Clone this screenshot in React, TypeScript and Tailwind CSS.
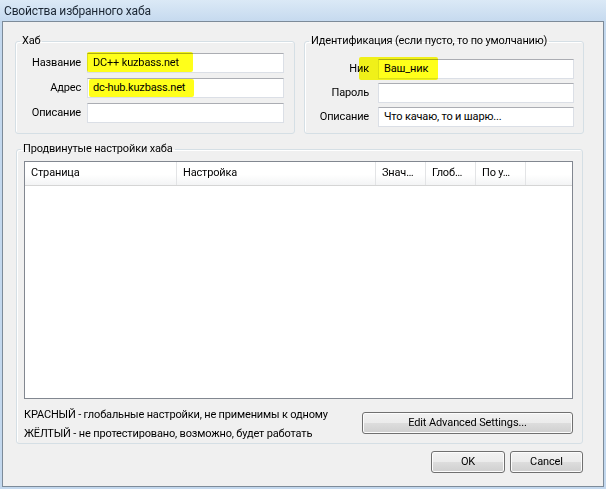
import React from 'react';

const inputCls =
  'relative h-[20px] bg-white border border-[#dbdfe6] border-t-[#abadb3] pl-[5px] flex items-center whitespace-nowrap';
const btnCls =
  'h-[22px] rounded-[3px] border border-[#707070] bg-[linear-gradient(#f2f2f2,#ebebeb_50%,#dddddd_50%,#cfcfcf)] shadow-[inset_0_0_0_1px_#fcfcfc] flex items-center justify-center text-black tracking-[-0.01em]';
const groupCls =
  'border border-[#d5dfe5] rounded-[3px] shadow-[inset_1px_1px_0_#ffffff] m-0 min-w-0';
const legendCls = 'ml-[4px] px-[2px] leading-[16px] h-[16px] whitespace-nowrap';

function Mark({ className }: { className: string }) {
  return <div className={`absolute bg-[#ffff1a] mix-blend-multiply rounded-[2px] ${className}`} />;
}

export default function App() {
  return (
    <div className="w-[606px] h-[489px] flex flex-col bg-[#c3d8ee] text-[11px] tracking-[-0.015em] text-black font-['Roboto',sans-serif]">
      <div className="h-[21px] pl-[4px] flex items-center text-[12px] text-[#1b2633] bg-[linear-gradient(#dbe9f6,#c6daef)]">
        Свойства избранного хаба
      </div>

      <div className="flex-1 mx-[2px] mb-[2px] border border-[#7d8b99] bg-[#f0f0f0] flex flex-col pl-[12px] pr-[19px]">
        {/* top groups */}
        <div className="flex gap-[9px] mt-[11px]">
          <fieldset className={`${groupCls} w-[280px] pt-[4px] pb-[10px] pr-[10px]`}>
            <legend className={legendCls}>Хаб</legend>
            <div className="flex flex-col gap-[5px]">
              <div className="flex items-center">
                <div className="w-[65px] text-right">Название</div>
                <div className={`${inputCls} ml-[6px] w-[197px]`}>
                  DC++ kuzbass.net
                  <Mark className="left-[-1px] top-[-2px] w-[106px] h-[20px]" />
                </div>
              </div>
              <div className="flex items-center">
                <div className="w-[65px] text-right">Адрес</div>
                <div className={`${inputCls} ml-[6px] w-[197px]`}>
                  dc-hub.kuzbass.net
                  <Mark className="left-[1px] top-[0px] w-[105px] h-[18px]" />
                </div>
              </div>
              <div className="flex items-center">
                <div className="w-[65px] text-right">Описание</div>
                <div className={`${inputCls} ml-[6px] w-[197px]`} />
              </div>
            </div>
          </fieldset>

          <fieldset className={`${groupCls} w-[280px] pt-[10px] pb-[6px] pr-[9px]`}>
            <legend className={legendCls}>Идентификация (если пусто, то по умолчанию)</legend>
            <div className="flex flex-col gap-[4px]">
              <div className="flex items-center">
                <div className="w-[64px] text-right">Ник</div>
                <div className={`${inputCls} ml-[9px] w-[196px]`}>
                  Ваш_ник
                  <Mark className="left-[-20px] top-[-3px] w-[79px] h-[23px]" />
                </div>
              </div>
              <div className="flex items-center">
                <div className="w-[64px] text-right">Пароль</div>
                <div className={`${inputCls} ml-[9px] w-[196px]`} />
              </div>
              <div className="flex items-center">
                <div className="w-[64px] text-right">Описание</div>
                <div className={`${inputCls} ml-[9px] w-[196px]`}>Что качаю, то и шарю...</div>
              </div>
            </div>
          </fieldset>
        </div>

        {/* advanced */}
        <fieldset className={`${groupCls} ml-[1px] mt-[7px] w-[567px] pt-[4px]`}>
          <legend className={legendCls}>Продвинутые настройки хаба</legend>
          <div className="pl-[7px] pr-[9px]">
            <div className="h-[238px] bg-white border border-[#828790] flex flex-col">
              <div className="h-[24px] flex border-b border-[#d5d5d5] bg-[linear-gradient(#ffffff,#ffffff_55%,#f3f4f5)]">
                <div className="w-[152px] border-r border-[#e3e4e6] pl-[6px] flex items-center">Страница</div>
                <div className="w-[199px] border-r border-[#e3e4e6] pl-[6px] flex items-center">Настройка</div>
                <div className="w-[50px] border-r border-[#e3e4e6] pl-[6px] flex items-center whitespace-nowrap">Знач…</div>
                <div className="w-[50px] border-r border-[#e3e4e6] pl-[6px] flex items-center whitespace-nowrap">Глоб…</div>
                <div className="w-[50px] border-r border-[#e3e4e6] pl-[6px] flex items-center whitespace-nowrap">По у…</div>
                <div className="flex-1" />
              </div>
            </div>
            <div className="flex mt-[6px]">
              <div className="flex-1 flex flex-col">
                <div className="leading-[19px] whitespace-nowrap">КРАСНЫЙ - глобальные настройки, не применимы к одному</div>
                <div className="leading-[19px] whitespace-nowrap">ЖЁЛТЫЙ - не протестировано, возможно, будет работать</div>
              </div>
              <button className={`${btnCls} w-[211px] mt-[7px]`}>Edit Advanced Settings...</button>
            </div>
          </div>
        </fieldset>

        {/* dialog buttons */}
        <div className="flex justify-end gap-[5px] mt-[7px] mr-[1px]">
          <button className={`${btnCls} w-[74px]`}>OK</button>
          <button className={`${btnCls} w-[73px]`}>Cancel</button>
        </div>
      </div>
    </div>
  );
}
